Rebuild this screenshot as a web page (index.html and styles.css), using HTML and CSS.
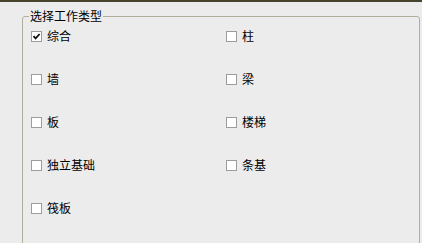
FILE: index.html
```html
<!DOCTYPE html>
<html lang="zh">
<head>
<meta charset="utf-8">
<link rel="stylesheet" href="styles.css">
</head>
<body>
<div class="topbar"></div>
<fieldset class="group">
  <legend class="group-title">选择工作类型</legend>
  <div class="options">
    <label class="opt"><span class="box"><svg viewBox="0 0 9 9" width="9" height="9"><path d="M1.5 4.2 L3.6 6.4 L7.6 2" fill="none" stroke="#111" stroke-width="1.8"/></svg></span>综合</label>
    <label class="opt"><span class="box"></span>柱</label>
    <label class="opt"><span class="box"></span>墙</label>
    <label class="opt"><span class="box"></span>梁</label>
    <label class="opt"><span class="box"></span>板</label>
    <label class="opt"><span class="box"></span>楼梯</label>
    <label class="opt"><span class="box"></span>独立基础</label>
    <label class="opt"><span class="box"></span>条基</label>
    <label class="opt"><span class="box"></span>筏板</label>
  </div>
</fieldset>
</body>
</html>
```
FILE: styles.css
```css
html, body {
  margin: 0;
  padding: 0;
  background: #ececec;
  overflow: hidden;
}
body {
  font-family: "Noto Sans CJK SC", "Noto Sans", sans-serif;
  font-size: 12px;
  color: #000;
}
.topbar {
  height: 2px;
  background: #47432d;
}
.group {
  margin: 7px 0 0 22px;
  width: 398px;
  height: 300px;
  box-sizing: border-box;
  padding: 0 0 0 8px;
  border: 1px solid #b2ae9c;
  border-radius: 3px;
}
.group-title {
  margin-left: -2px;
  padding: 0 1px;
  line-height: 14px;
  height: 14px;
}
.options {
  display: grid;
  grid-template-columns: 195px 1fr;
  grid-auto-rows: 14px;
  row-gap: 29px;
  padding-top: 6px;
}
.opt {
  display: flex;
  align-items: center;
  gap: 5px;
  line-height: 14px;
  height: 14px;
}
.box {
  width: 11px;
  height: 11px;
  box-sizing: border-box;
  border: 1px solid #9c9c9c;
  background: #fff;
  display: flex;
  align-items: center;
  justify-content: center;
  flex: none;
}
.box svg {
  display: block;
}
```
